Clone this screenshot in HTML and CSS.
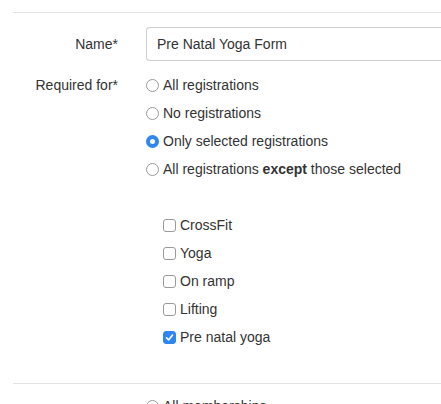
FILE: index.html
```html
<!DOCTYPE html>
<html>
<head>
<meta charset="utf-8">
<link rel="stylesheet" href="styles.css">
</head>
<body>
<div class="divider"></div>
<div class="row name-row">
  <label class="label">Name*</label>
  <div class="control"><input class="text-input" type="text" value="Pre Natal Yoga Form"></div>
</div>
<div class="row req-row">
  <div class="label">Required for*</div>
  <div class="control">
    <div class="option"><span class="radio"></span><span>All registrations</span></div>
    <div class="option"><span class="radio"></span><span>No registrations</span></div>
    <div class="option"><span class="radio checked"></span><span>Only selected registrations</span></div>
    <div class="option"><span class="radio"></span><span>All registrations <b>except</b> those selected</span></div>
    <div class="checklist">
      <div class="option"><span class="check"></span><span>CrossFit</span></div>
      <div class="option"><span class="check"></span><span>Yoga</span></div>
      <div class="option"><span class="check"></span><span>On ramp</span></div>
      <div class="option"><span class="check"></span><span>Lifting</span></div>
      <div class="option"><span class="check checked"><svg width="9" height="9" viewBox="0 0 9 9"><path d="M1.5 4.8 L3.6 6.9 L7.6 2" fill="none" stroke="#fff" stroke-width="1.6" stroke-linecap="round" stroke-linejoin="round"/></svg></span><span>Pre natal yoga</span></div>
    </div>
  </div>
</div>
<div class="divider bottom"></div>
<div class="row next-row">
  <div class="label"></div>
  <div class="control">
    <div class="option"><span class="radio"></span><span>All memberships</span></div>
  </div>
</div>
</body>
</html>
```
FILE: styles.css
```css
html, body {
  margin: 0;
  padding: 0;
  background: #fff;
  overflow: hidden;
}
body {
  font-family: "Liberation Sans", Arial, sans-serif;
  font-size: 14px;
  color: #333;
  width: 441px;
  height: 404px;
}
.divider {
  margin: 12px 0 0 13px;
  border-top: 1px solid #e3e3e3;
}
.divider.bottom {
  margin-top: 32px;
}
.row {
  display: grid;
  grid-template-columns: 118px 1fr;
  column-gap: 28px;
}
.label {
  text-align: right;
  line-height: 28px;
}
.name-row {
  margin-top: 14px;
  align-items: center;
}
.name-row .label {
  line-height: 34px;
}
.text-input {
  box-sizing: border-box;
  width: 300px;
  height: 34px;
  border: 1px solid #cfcfcf;
  border-right: none;
  border-radius: 4px 0 0 4px;
  padding: 0 10px;
  font-family: inherit;
  font-size: 14px;
  color: #333;
  outline: none;
}
.req-row {
  margin-top: 10px;
}
.option {
  display: flex;
  align-items: center;
  gap: 4px;
  height: 28px;
  line-height: 28px;
  white-space: nowrap;
}
.option b {
  font-weight: bold;
}
.radio {
  box-sizing: border-box;
  width: 13px;
  height: 13px;
  border-radius: 50%;
  border: 1px solid #9a9a9a;
  background: #fff;
  flex: none;
}
.radio.checked {
  border: 4px solid #2f86f0;
  background: #fff;
}
.checklist {
  margin-top: 28px;
  padding-left: 17px;
}
.check {
  box-sizing: border-box;
  width: 13px;
  height: 13px;
  border-radius: 3px;
  border: 1px solid #9a9a9a;
  background: #fff;
  flex: none;
  display: flex;
  align-items: center;
  justify-content: center;
}
.check.checked {
  border-color: #2f86f0;
  background: #2f86f0;
}
.next-row {
  margin-top: 8px;
}
```
